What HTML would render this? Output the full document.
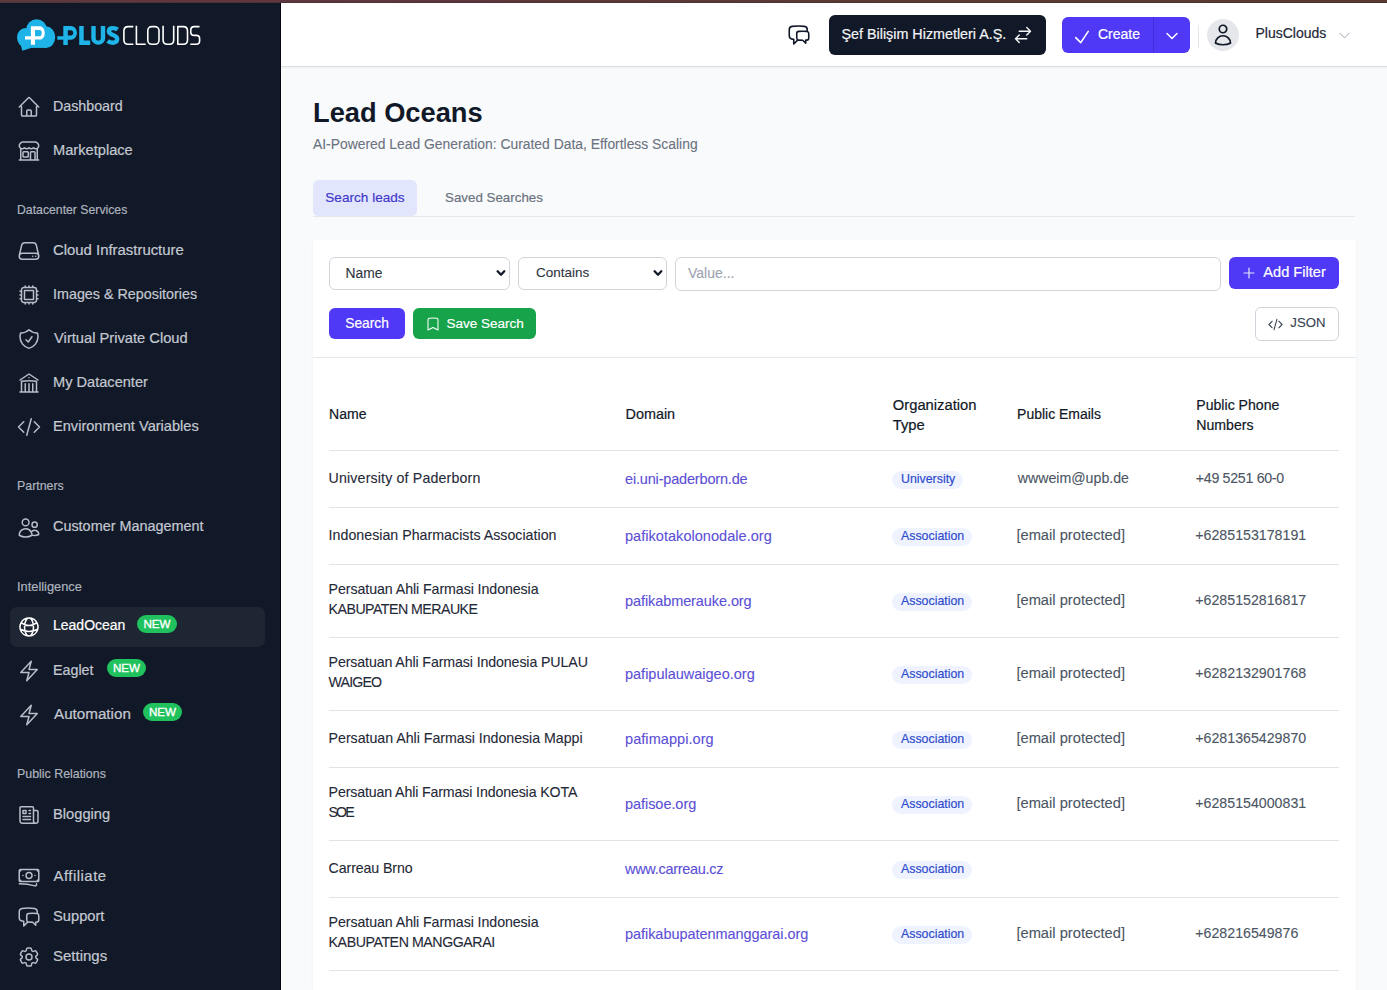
<!DOCTYPE html>
<html><head><meta charset="utf-8"><title>Lead Oceans</title>
<style>
html,body{margin:0;padding:0}
body{width:1387px;height:990px;overflow:hidden;position:relative;background:#f9fafb;font-family:"Liberation Sans",sans-serif}
.t{position:absolute;white-space:nowrap}
.r{position:absolute;box-sizing:content-box}
.i{position:absolute;overflow:visible}
</style></head><body>
<div class="r" style="left:0px;top:0px;width:1387px;height:2px;background:linear-gradient(90deg,#5c3a3c,#603640 20%,#5a3a33 60%,#5b3a30)"></div>
<div class="r" style="left:0px;top:2px;width:1387px;height:1px;background:linear-gradient(90deg,#4e343a,#47312c)"></div>
<div class="r" style="left:0px;top:3px;width:280px;height:987px;background:#111827"></div>
<div class="r" style="left:280px;top:3px;width:1px;height:987px;background:#030712"></div>
<div class="r" style="left:281px;top:3px;width:1106px;height:63px;background:#fff"></div>
<div class="r" style="left:281px;top:66px;width:1106px;height:1px;background:#dcdee2"></div>
<div class="r" style="left:281px;top:67px;width:1106px;height:2px;background:linear-gradient(#eceef1,#f9fafb)"></div>
<svg class="i" style="left:0;top:0" width="210" height="56" viewBox="0 0 210 56">
<g fill="#1eb4e8">
<ellipse cx="25.6" cy="37.6" rx="8.6" ry="9.6"/>
<ellipse cx="46.6" cy="37.2" rx="8.6" ry="10.6"/>
<circle cx="36.6" cy="29.6" r="10.3"/>
<rect x="25" y="30" width="22" height="17.9"/>
<path d="M20 42 L31 47.9 L22.3 50.8 Z"/>
<path d="M57.3 36.2 H66 V39.7 H57.3 Z"/>
<path fill-rule="evenodd" d="M63.3 26 H71 A6 6.85 0 0 1 71 39.7 H67.8 V44.9 H63.3 Z M67.8 30.2 V35.5 H70.8 A2.4 2.65 0 0 0 70.8 30.2 Z"/>
<path d="M79.2 26 H83.7 V40.6 H90.2 V44.9 H79.2 Z"/>
</g>
<g fill="none" stroke="#1eb4e8" stroke-width="4.4">
<path d="M93.5 26 V37.9 A4.75 4.75 0 0 0 103 37.9 V26"/>
<path d="M117.6 29.5 C116.2 28.4 114.6 28.1 112.9 28.1 C110.6 28.1 108.9 29.2 108.9 31.2 C108.9 35.8 117.2 34.2 117.2 39 C117.2 41.4 115.3 42.8 112.6 42.8 C110.8 42.8 109.2 42.3 107.6 41.1"/>
</g>
<path fill="#fff" fill-rule="evenodd" d="M30.9 26.2 H40 A4.8 6.7 0 0 1 40 39.6 H35 V44.8 H30.9 V39.6 H25 V36.2 H30.9 Z M35 30 V36.2 H39.6 A2.1 3.1 0 0 0 39.6 30 Z"/>
<g fill="none" stroke="#fff" stroke-width="1.6" stroke-linejoin="round">
<path d="M133.3 26.6 H128.2 Q123.9 26.6 123.9 31 V40 Q123.9 44.3 128.2 44.3 H133.3"/>
<path d="M136.4 25.8 V44.3 H145.7"/>
<rect x="147.8" y="26.6" width="11.2" height="17.7" rx="4"/>
<path d="M163.1 25.8 V40 Q163.1 44.3 167.4 44.3 H169.4 Q173.7 44.3 173.7 40 V25.8"/>
<path d="M177.8 26.6 H183.3 Q187.5 26.6 187.5 31 V40 Q187.5 44.3 183.3 44.3 H177.8 Z"/>
<path d="M199.5 26.6 H194.2 Q190.8 26.6 190.8 30 V32.2 Q190.8 35.4 194.2 35.4 H196.2 Q199.6 35.4 199.6 38.6 V41 Q199.6 44.3 196.2 44.3 H190.3"/>
</g>
</svg>
<svg class="i" style="left:17px;top:95px;" width="24" height="24" viewBox="0 0 24 24" fill="none" stroke="#b8bec9" stroke-width="1.5" stroke-linecap="round" stroke-linejoin="round"><path d="M2.25 12l8.954-8.955c.44-.439 1.152-.439 1.591 0L21.75 12M4.5 9.75v10.125c0 .621.504 1.125 1.125 1.125H9.75v-4.875c0-.621.504-1.125 1.125-1.125h2.25c.621 0 1.125.504 1.125 1.125V21h4.125c.621 0 1.125-.504 1.125-1.125V9.75M8.25 21h8.25"/></svg>
<div class="t " style="left:53.0px;top:97.56px;font-size:14.25px;line-height:17px;color:#c3c8d1;-webkit-text-stroke:0.20px #c3c8d1;">Dashboard</div>
<svg class="i" style="left:17px;top:139px;" width="24" height="24" viewBox="0 0 24 24" fill="none" stroke="#b8bec9" stroke-width="1.5" stroke-linecap="round" stroke-linejoin="round"><path d="M13.5 21v-7.5a.75.75 0 01.75-.75h3a.75.75 0 01.75.75V21m-4.5 0H2.36m11.14 0H18m0 0h3.64m-1.39 0V9.349m-16.5 11.65V9.35m0 0a3.001 3.001 0 003.75-.615A2.993 2.993 0 009.75 9.75c.896 0 1.7-.393 2.25-1.016a2.993 2.993 0 002.25 1.016c.896 0 1.7-.393 2.25-1.016a3.001 3.001 0 003.75.614m-16.5 0a3.004 3.004 0 01-.621-4.72L4.318 3.44A1.5 1.5 0 015.378 3h13.243a1.5 1.5 0 011.06.44l1.19 1.189a3 3 0 01-.621 4.72m-13.5 8.65h3.75a.75.75 0 00.75-.75V13.5a.75.75 0 00-.75-.75H6.75a.75.75 0 00-.75.75v3.75c0 .415.336.75.75.75z"/></svg>
<div class="t " style="left:53.0px;top:140.92px;font-size:14.65px;line-height:18px;color:#c3c8d1;-webkit-text-stroke:0.21px #c3c8d1;">Marketplace</div>
<div class="t " style="left:17.0px;top:203.45px;font-size:12.26px;line-height:15px;color:#aeb4bf;-webkit-text-stroke:0.18px #aeb4bf;">Datacenter Services</div>
<svg class="i" style="left:17px;top:238.8px;" width="24" height="24" viewBox="0 0 24 24" fill="none" stroke="#b8bec9" stroke-width="1.5" stroke-linecap="round" stroke-linejoin="round"><path d="M21.75 17.25v-.228a4.5 4.5 0 00-.12-1.03l-2.268-9.64a3.375 3.375 0 00-3.285-2.602H7.923a3.375 3.375 0 00-3.285 2.602l-2.268 9.64a4.5 4.5 0 00-.12 1.03v.228m19.5 0a3 3 0 01-3 3H5.25a3 3 0 01-3-3m19.5 0a3 3 0 00-3-3H5.25a3 3 0 00-3 3m16.5 0h.008v.008h-.008v-.008zm-3 0h.008v.008h-.008v-.008z"/></svg>
<div class="t " style="left:53.0px;top:240.63px;font-size:14.9px;line-height:18px;color:#c3c8d1;-webkit-text-stroke:0.21px #c3c8d1;">Cloud Infrastructure</div>
<svg class="i" style="left:17px;top:283px;" width="24" height="24" viewBox="0 0 24 24" fill="none" stroke="#b8bec9" stroke-width="1.5" stroke-linecap="round" stroke-linejoin="round"><path d="M8.25 3v1.5M4.5 8.25H3m18 0h-1.5M4.5 12H3m18 0h-1.5m-15 3.75H3m18 0h-1.5M8.25 19.5V21M12 3v1.5m0 15V21m3.75-18v1.5m0 15V21m-9-1.5h10.5a2.25 2.25 0 002.25-2.25V6.75a2.25 2.25 0 00-2.25-2.25H6.75A2.25 2.25 0 004.5 6.75v10.5a2.25 2.25 0 002.25 2.25zm.75-12h9v9h-9v-9z"/></svg>
<div class="t " style="left:53.0px;top:285.53px;font-size:14.33px;line-height:17px;color:#c3c8d1;-webkit-text-stroke:0.20px #c3c8d1;">Images &amp; Repositories</div>
<svg class="i" style="left:17px;top:326.7px;" width="24" height="24" viewBox="0 0 24 24" fill="none" stroke="#b8bec9" stroke-width="1.5" stroke-linecap="round" stroke-linejoin="round"><path d="M9 12.75L11.25 15 15 9.75m-3-7.036A11.959 11.959 0 013.598 6 11.99 11.99 0 003 9.749c0 5.592 3.824 10.29 9 11.623 5.176-1.332 9-6.03 9-11.622 0-1.31-.21-2.571-.598-3.751h-.152c-3.196 0-6.1-1.248-8.25-3.285z"/></svg>
<div class="t " style="left:54.1px;top:328.60px;font-size:14.7px;line-height:18px;color:#c3c8d1;-webkit-text-stroke:0.21px #c3c8d1;">Virtual Private Cloud</div>
<svg class="i" style="left:17px;top:370.8px;" width="24" height="24" viewBox="0 0 24 24" fill="none" stroke="#b8bec9" stroke-width="1.5" stroke-linecap="round" stroke-linejoin="round"><path d="M12 21v-8.25M15.75 21v-8.25M8.25 21v-8.25M3 9l9-6 9 6m-1.5 12V10.332A48.36 48.36 0 0012 9.75c-2.551 0-5.056.2-7.5.582V21M3 21h18M12 6.75h.008v.008H12V6.75z"/></svg>
<div class="t " style="left:53.0px;top:372.74px;font-size:14.6px;line-height:18px;color:#c3c8d1;-webkit-text-stroke:0.21px #c3c8d1;">My Datacenter</div>
<svg class="i" style="left:17px;top:415px;" width="24" height="24" viewBox="0 0 24 24" fill="none" stroke="#b8bec9" stroke-width="1.5" stroke-linecap="round" stroke-linejoin="round"><path d="M17.25 6.75L22.5 12l-5.25 5.25m-10.5 0L1.5 12l5.25-5.25m7.5-3l-4.5 16.5"/></svg>
<div class="t " style="left:53.0px;top:416.94px;font-size:14.6px;line-height:18px;color:#c3c8d1;-webkit-text-stroke:0.21px #c3c8d1;">Environment Variables</div>
<div class="t " style="left:17.0px;top:479.21px;font-size:12.38px;line-height:15px;color:#aeb4bf;-webkit-text-stroke:0.18px #aeb4bf;">Partners</div>
<svg class="i" style="left:17px;top:515.6px;" width="24" height="24" viewBox="0 0 24 24" fill="none" stroke="#b8bec9" stroke-width="1.5" stroke-linecap="round" stroke-linejoin="round"><path d="M15 19.128a9.38 9.38 0 002.625.372 9.337 9.337 0 004.121-.952 4.125 4.125 0 00-7.533-2.493M15 19.128v-.003c0-1.113-.285-2.16-.786-3.07M15 19.128v.106A12.318 12.318 0 018.624 21c-2.331 0-4.512-.645-6.374-1.766l-.001-.109a6.375 6.375 0 0111.964-3.07M12 6.375a3.375 3.375 0 11-6.75 0 3.375 3.375 0 016.75 0zm8.25 2.25a2.625 2.625 0 11-5.25 0 2.625 2.625 0 015.25 0z"/></svg>
<div class="t " style="left:53.0px;top:518.10px;font-size:14.42px;line-height:17px;color:#c3c8d1;-webkit-text-stroke:0.21px #c3c8d1;">Customer Management</div>
<div class="t " style="left:17.0px;top:579.45px;font-size:12.84px;line-height:15px;color:#aeb4bf;-webkit-text-stroke:0.18px #aeb4bf;">Intelligence</div>
<div class="r" style="left:10px;top:607px;width:255px;height:40px;background:#1f2633;border-radius:7px"></div>
<svg class="i" style="left:17px;top:614.8px;" width="24" height="24" viewBox="0 0 24 24" fill="none" stroke="#ffffff" stroke-width="1.5" stroke-linecap="round" stroke-linejoin="round"><path d="M12 21a9.004 9.004 0 008.716-6.747M12 21a9.004 9.004 0 01-8.716-6.747M12 21c2.485 0 4.5-4.03 4.5-9S14.485 3 12 3m0 18c-2.485 0-4.5-4.03-4.5-9S9.515 3 12 3m0 0a8.997 8.997 0 017.843 4.582M12 3a8.997 8.997 0 00-7.843 4.582m15.686 0A11.953 11.953 0 0112 10.5c-2.998 0-5.74-1.1-7.843-2.918m15.686 0A8.959 8.959 0 0121 12c0 .778-.099 1.533-.284 2.253m0 0A17.919 17.919 0 0112 16.5c-3.162 0-6.133-.815-8.716-2.247m0 0A9.015 9.015 0 013 12c0-1.605.42-3.113 1.157-4.418"/></svg>
<div class="t " style="left:53.0px;top:617.45px;font-size:14.0px;line-height:17px;color:#ffffff;-webkit-text-stroke:0.20px #ffffff;">LeadOcean</div>
<div class="r" style="left:137px;top:615px;width:40px;height:18px;background:#1fc25c;border-radius:9px;color:#fff;font-size:11.6px;-webkit-text-stroke:0.35px #fff;line-height:18px;text-align:center">NEW</div>
<svg class="i" style="left:17px;top:659px;" width="24" height="24" viewBox="0 0 24 24" fill="none" stroke="#b8bec9" stroke-width="1.5" stroke-linecap="round" stroke-linejoin="round"><path d="M3.75 13.5l10.5-11.25L12 10.5h8.25L9.75 21.75 12 13.5H3.75z"/></svg>
<div class="t " style="left:53.0px;top:661.54px;font-size:14.3px;line-height:17px;color:#c3c8d1;-webkit-text-stroke:0.20px #c3c8d1;">Eaglet</div>
<div class="r" style="left:107px;top:659px;width:39px;height:18px;background:#1fc25c;border-radius:9px;color:#fff;font-size:11.6px;-webkit-text-stroke:0.35px #fff;line-height:18px;text-align:center">NEW</div>
<svg class="i" style="left:17px;top:703px;" width="24" height="24" viewBox="0 0 24 24" fill="none" stroke="#b8bec9" stroke-width="1.5" stroke-linecap="round" stroke-linejoin="round"><path d="M3.75 13.5l10.5-11.25L12 10.5h8.25L9.75 21.75 12 13.5H3.75z"/></svg>
<div class="t " style="left:54.0px;top:704.73px;font-size:15.2px;line-height:18px;color:#c3c8d1;-webkit-text-stroke:0.22px #c3c8d1;">Automation</div>
<div class="r" style="left:143px;top:703px;width:39px;height:18px;background:#1fc25c;border-radius:9px;color:#fff;font-size:11.6px;-webkit-text-stroke:0.35px #fff;line-height:18px;text-align:center">NEW</div>
<div class="t " style="left:17.0px;top:767.20px;font-size:12.4px;line-height:15px;color:#aeb4bf;-webkit-text-stroke:0.18px #aeb4bf;">Public Relations</div>
<svg class="i" style="left:17px;top:803.2px;" width="24" height="24" viewBox="0 0 24 24" fill="none" stroke="#b8bec9" stroke-width="1.5" stroke-linecap="round" stroke-linejoin="round"><path d="M12 7.5h1.5m-1.5 3h1.5m-7.5 3h7.5m-7.5 3h7.5m3-9h3.375c.621 0 1.125.504 1.125 1.125V18a2.25 2.25 0 01-2.25 2.25M16.5 7.5V18a2.25 2.25 0 002.25 2.25M16.5 7.5V4.875c0-.621-.504-1.125-1.125-1.125H4.125C3.504 3.75 3 4.254 3 4.875V18a2.25 2.25 0 002.25 2.25h13.5M6 7.5h3v3H6v-3z"/></svg>
<div class="t " style="left:53.0px;top:805.10px;font-size:14.7px;line-height:18px;color:#c3c8d1;-webkit-text-stroke:0.21px #c3c8d1;">Blogging</div>
<svg class="i" style="left:17px;top:865.2px;" width="24" height="24" viewBox="0 0 24 24" fill="none" stroke="#b8bec9" stroke-width="1.5" stroke-linecap="round" stroke-linejoin="round"><path d="M2.25 18.75a60.07 60.07 0 0115.797 2.101c.727.198 1.453-.342 1.453-1.096V18.75M3.75 4.5v.75A.75.75 0 013 6h-.75m0 0v-.375c0-.621.504-1.125 1.125-1.125H20.25M2.25 6v9m18-10.5v.75c0 .414.336.75.75.75h.75m-1.5-1.5h.375c.621 0 1.125.504 1.125 1.125v9.75c0 .621-.504 1.125-1.125 1.125h-.375m1.5-1.5H21a.75.75 0 00-.75.75v.75m0 0H3.75m0 0h-.375a1.125 1.125 0 01-1.125-1.125V15m1.5 1.5v-.75A.75.75 0 003 15h-.75M15 10.5a3 3 0 11-6 0 3 3 0 016 0zm3 0h.008v.008H18V10.5zm-12 0h.008v.008H6V10.5z"/></svg>
<div class="t " style="left:53.5px;top:867.03px;font-size:14.9px;line-height:18px;color:#c3c8d1;-webkit-text-stroke:0.21px #c3c8d1;letter-spacing:0.500px">Affiliate</div>
<svg class="i" style="left:17px;top:905.4px;" width="24" height="24" viewBox="0 0 24 24" fill="none" stroke="#b8bec9" stroke-width="1.5" stroke-linecap="round" stroke-linejoin="round"><path d="M20.25 8.511c.884.284 1.5 1.128 1.5 2.097v4.286c0 1.136-.847 2.1-1.98 2.193-.34.027-.68.052-1.02.072v3.091l-3-3c-1.354 0-2.694-.055-4.02-.163a2.115 2.115 0 01-.825-.242m9.345-8.334a2.126 2.126 0 00-.476-.095 48.64 48.64 0 00-8.048 0c-1.131.094-1.976 1.057-1.976 2.192v4.286c0 .837.46 1.58 1.155 1.951m9.345-8.334V6.637c0-1.621-1.152-3.026-2.76-3.235A48.455 48.455 0 0011.25 3c-2.115 0-4.198.137-6.24.402-1.608.209-2.76 1.614-2.76 3.235v6.226c0 1.621 1.152 3.026 2.76 3.235.577.075 1.157.14 1.74.194V21l4.155-4.155"/></svg>
<div class="t " style="left:53.0px;top:907.30px;font-size:14.7px;line-height:18px;color:#c3c8d1;-webkit-text-stroke:0.21px #c3c8d1;">Support</div>
<svg class="i" style="left:17px;top:945.4px;" width="24" height="24" viewBox="0 0 24 24" fill="none" stroke="#b8bec9" stroke-width="1.5" stroke-linecap="round" stroke-linejoin="round"><path d="M9.594 3.94c.09-.542.56-.94 1.11-.94h2.593c.55 0 1.02.398 1.11.94l.213 1.281c.063.374.313.686.645.87.074.04.147.083.22.127.324.196.72.257 1.075.124l1.217-.456a1.125 1.125 0 011.37.49l1.296 2.247a1.125 1.125 0 01-.26 1.431l-1.003.827c-.293.24-.438.613-.431.992a6.759 6.759 0 010 .255c-.007.378.138.75.43.99l1.005.828c.424.35.534.954.26 1.43l-1.298 2.247a1.125 1.125 0 01-1.369.491l-1.217-.456c-.355-.133-.75-.072-1.076.124a6.57 6.57 0 01-.22.128c-.331.183-.581.495-.644.869l-.213 1.28c-.09.543-.56.941-1.11.941h-2.594c-.55 0-1.02-.398-1.11-.94l-.213-1.281c-.062-.374-.312-.686-.644-.87a6.52 6.52 0 01-.22-.127c-.325-.196-.72-.257-1.076-.124l-1.217.456a1.125 1.125 0 01-1.369-.49l-1.297-2.247a1.125 1.125 0 01.26-1.431l1.004-.827c.292-.24.437-.613.43-.992a6.932 6.932 0 010-.255c.007-.378-.138-.75-.43-.99l-1.004-.828a1.125 1.125 0 01-.26-1.43l1.297-2.247a1.125 1.125 0 011.37-.491l1.216.456c.356.133.751.072 1.076-.124.072-.044.146-.087.22-.128.332-.183.582-.495.644-.869l.214-1.281zM15 12a3 3 0 11-6 0 3 3 0 016 0z"/></svg>
<div class="t " style="left:53.0px;top:947.20px;font-size:15px;line-height:18px;color:#c3c8d1;-webkit-text-stroke:0.21px #c3c8d1;">Settings</div>
<svg class="i" style="left:787px;top:23px;" width="24" height="24" viewBox="0 0 24 24" fill="none" stroke="#111827" stroke-width="1.6" stroke-linecap="round" stroke-linejoin="round"><path d="M20.25 8.511c.884.284 1.5 1.128 1.5 2.097v4.286c0 1.136-.847 2.1-1.98 2.193-.34.027-.68.052-1.02.072v3.091l-3-3c-1.354 0-2.694-.055-4.02-.163a2.115 2.115 0 01-.825-.242m9.345-8.334a2.126 2.126 0 00-.476-.095 48.64 48.64 0 00-8.048 0c-1.131.094-1.976 1.057-1.976 2.192v4.286c0 .837.46 1.58 1.155 1.951m9.345-8.334V6.637c0-1.621-1.152-3.026-2.76-3.235A48.455 48.455 0 0011.25 3c-2.115 0-4.198.137-6.24.402-1.608.209-2.76 1.614-2.76 3.235v6.226c0 1.621 1.152 3.026 2.76 3.235.577.075 1.157.14 1.74.194V21l4.155-4.155"/></svg>
<div class="r" style="left:829px;top:15px;width:217px;height:40px;background:#111827;border-radius:6px"></div>
<div class="t " style="left:841.5px;top:25.83px;font-size:14.33px;line-height:17px;color:#f3f4f6;-webkit-text-stroke:0.20px #f3f4f6;">Şef Bilişim Hizmetleri A.Ş.</div>
<svg class="i" style="left:1013px;top:25px;" width="20" height="20" viewBox="0 0 24 24" fill="none" stroke="#f3f4f6" stroke-width="1.7" stroke-linecap="round" stroke-linejoin="round"><path d="M7.5 21L3 16.5m0 0L7.5 12M3 16.5h13.5m0-13.5L21 7.5m0 0L16.5 12M21 7.5H7.5"/></svg>
<div class="r" style="left:1062px;top:17px;width:128px;height:36px;background:#4f39f6;border-radius:6px"></div>
<div class="r" style="left:1153px;top:17px;width:1px;height:36px;background:#4230d6"></div>
<svg class="i" style="left:1071.5px;top:26.5px;" width="20" height="20" viewBox="0 0 24 24" fill="none" stroke="#fff" stroke-width="1.9" stroke-linecap="round" stroke-linejoin="round"><path d="M4.5 12.75l6 6 9-13.5"/></svg>
<div class="t " style="left:1097.9px;top:25.83px;font-size:14.05px;line-height:17px;color:#fff;-webkit-text-stroke:0.20px #fff;">Create</div>
<svg class="i" style="left:1163.5px;top:27.5px;" width="16" height="16" viewBox="0 0 24 24" fill="none" stroke="#fff" stroke-width="2.2" stroke-linecap="round" stroke-linejoin="round"><path d="M19.5 8.25l-7.5 7.5-7.5-7.5"/></svg>
<div class="r" style="left:1198px;top:25px;width:1px;height:23px;background:#e5e7eb"></div>
<div class="r" style="left:1207px;top:19px;width:32px;height:32px;border-radius:16px;background:#e5e7eb"></div>
<svg class="i" style="left:1211px;top:23.3px;" width="24" height="24" viewBox="0 0 24 24" fill="none" stroke="#111827" stroke-width="1.7" stroke-linecap="round" stroke-linejoin="round"><path d="M15.75 6a3.75 3.75 0 11-7.5 0 3.75 3.75 0 017.5 0zM4.501 20.118a7.5 7.5 0 0114.998 0A17.933 17.933 0 0112 21.75c-2.676 0-5.216-.584-7.499-1.632z"/></svg>
<div class="t " style="left:1255.5px;top:25.35px;font-size:14.0px;line-height:17px;color:#1f2937;-webkit-text-stroke:0.20px #1f2937;">PlusClouds</div>
<svg class="i" style="left:1337px;top:28px;" width="15" height="15" viewBox="0 0 24 24" fill="none" stroke="#9ca3af" stroke-width="1.6" stroke-linecap="round" stroke-linejoin="round"><path d="M19.5 8.25l-7.5 7.5-7.5-7.5"/></svg>
<div class="t " style="left:313.0px;top:96.45px;font-size:27.25px;line-height:33px;color:#111827;font-weight:700;">Lead Oceans</div>
<div class="t " style="left:313.0px;top:135.99px;font-size:13.88px;line-height:17px;color:#6b7280;-webkit-text-stroke:0.1px #6b7280;">AI-Powered Lead Generation: Curated Data, Effortless Scaling</div>
<div class="r" style="left:313px;top:180px;width:104px;height:36px;background:#e1e6fd;border-radius:6px 6px 5px 5px"></div>
<div class="t " style="left:325.3px;top:189.68px;font-size:13.6px;line-height:16px;color:#4338ca;-webkit-text-stroke:0.19px #4338ca;">Search leads</div>
<div class="t " style="left:445.0px;top:189.77px;font-size:13.35px;line-height:16px;color:#6b7280;-webkit-text-stroke:0.19px #6b7280;">Saved Searches</div>
<div class="r" style="left:313px;top:216px;width:1042px;height:1px;background:#e5e7eb"></div>
<div class="r" style="left:313px;top:240px;width:1043px;height:750px;background:#fff;box-shadow:0 1px 3px rgba(0,0,0,0.05)"></div>
<div class="r" style="left:329px;top:257px;width:179px;height:31px;border:1px solid #d1d5db;border-radius:6px;background:#fff;"></div>
<div class="t " style="left:345.6px;top:264.72px;font-size:13.8px;line-height:17px;color:#2d3441;-webkit-text-stroke:0.1px #2d3441;">Name</div>
<svg class="i" style="left:494px;top:268px" width="14" height="10" viewBox="0 0 14 10" fill="none" stroke="#111827" stroke-width="2.3" stroke-linecap="round" stroke-linejoin="round"><path d="M3.6 3.3 L7 6.8 L10.3 3.3"/></svg>
<div class="r" style="left:518px;top:257px;width:147px;height:31px;border:1px solid #d1d5db;border-radius:6px;background:#fff;"></div>
<div class="t " style="left:536.0px;top:265.33px;font-size:13.47px;line-height:16px;color:#2d3441;-webkit-text-stroke:0.1px #2d3441;">Contains</div>
<svg class="i" style="left:650.5px;top:268px" width="14" height="10" viewBox="0 0 14 10" fill="none" stroke="#111827" stroke-width="2.3" stroke-linecap="round" stroke-linejoin="round"><path d="M3.6 3.3 L7 6.8 L10.3 3.3"/></svg>
<div class="r" style="left:675px;top:257px;width:544px;height:32px;border:1px solid #d1d5db;border-radius:6px;background:#fff;"></div>
<div class="t " style="left:688.0px;top:265.15px;font-size:14px;line-height:17px;color:#9ca3af;-webkit-text-stroke:0.1px #9ca3af;">Value...</div>
<div class="r" style="left:1229px;top:257px;width:110px;height:32px;background:#4f39f6;border-radius:6px"></div>
<svg class="i" style="left:1241px;top:265px;" width="16" height="16" viewBox="0 0 24 24" fill="none" stroke="#e0e7ff" stroke-width="1.8" stroke-linecap="round" stroke-linejoin="round"><path d="M12 4.5v15m7.5-7.5h-15"/></svg>
<div class="t " style="left:1263.3px;top:263.14px;font-size:14.6px;line-height:18px;color:#fff;-webkit-text-stroke:0.21px #fff;">Add Filter</div>
<div class="r" style="left:329px;top:308px;width:76px;height:31px;background:#4f39f6;border-radius:6px"></div>
<div class="t " style="left:345.3px;top:315.63px;font-size:13.75px;line-height:16px;color:#fff;-webkit-text-stroke:0.20px #fff;">Search</div>
<div class="r" style="left:413px;top:308px;width:123px;height:31px;background:#16a34a;border-radius:6px"></div>
<svg class="i" style="left:424.5px;top:316px;" width="16" height="16" viewBox="0 0 24 24" fill="none" stroke="#fff" stroke-width="1.6" stroke-linecap="round" stroke-linejoin="round"><path d="M17.593 3.322c1.1.128 1.907 1.077 1.907 2.185V21L12 17.25 4.5 21V5.507c0-1.108.806-2.057 1.907-2.185a48.507 48.507 0 0111.186 0z"/></svg>
<div class="t " style="left:446.5px;top:315.71px;font-size:13.52px;line-height:16px;color:#fff;-webkit-text-stroke:0.19px #fff;">Save Search</div>
<div class="r" style="left:1255px;top:307px;width:82px;height:32px;border:1px solid #d1d5db;border-radius:6px;background:#fff;"></div>
<svg class="i" style="left:1267.5px;top:316.5px;" width="15" height="15" viewBox="0 0 24 24" fill="none" stroke="#374151" stroke-width="1.7" stroke-linecap="round" stroke-linejoin="round"><path d="M17.25 6.75L22.5 12l-5.25 5.25m-10.5 0L1.5 12l5.25-5.25m7.5-3l-4.5 16.5"/></svg>
<div class="t " style="left:1290.3px;top:315.43px;font-size:13.18px;line-height:16px;color:#374151;-webkit-text-stroke:0.1px #374151;">JSON</div>
<div class="r" style="left:313px;top:357px;width:1043px;height:1px;background:#e5e7eb"></div>
<div class="t " style="left:329.1px;top:406.43px;font-size:14.06px;line-height:17px;color:#111827;-webkit-text-stroke:0.20px #111827;">Name</div>
<div class="t " style="left:625.5px;top:406.31px;font-size:14.4px;line-height:17px;color:#111827;-webkit-text-stroke:0.21px #111827;">Domain</div>
<div class="t " style="left:892.8px;top:395.88px;font-size:14.76px;line-height:18px;color:#111827;-webkit-text-stroke:0.21px #111827;">Organization</div>
<div class="t " style="left:892.8px;top:415.88px;font-size:14.76px;line-height:18px;color:#111827;-webkit-text-stroke:0.21px #111827;">Type</div>
<div class="t " style="left:1017.1px;top:406.36px;font-size:13.97px;line-height:17px;color:#111827;-webkit-text-stroke:0.20px #111827;">Public Emails</div>
<div class="t " style="left:1196.3px;top:396.61px;font-size:14.1px;line-height:17px;color:#111827;-webkit-text-stroke:0.20px #111827;">Public Phone</div>
<div class="t " style="left:1196.3px;top:416.61px;font-size:14.1px;line-height:17px;color:#111827;-webkit-text-stroke:0.20px #111827;">Numbers</div>
<div class="r" style="left:329px;top:450px;width:1010px;height:1px;background:#e1e3e7"></div>
<div class="r" style="left:329px;top:507px;width:1010px;height:1px;background:#e1e3e7"></div>
<div class="r" style="left:329px;top:564px;width:1010px;height:1px;background:#e1e3e7"></div>
<div class="r" style="left:329px;top:637px;width:1010px;height:1px;background:#e1e3e7"></div>
<div class="r" style="left:329px;top:710px;width:1010px;height:1px;background:#e1e3e7"></div>
<div class="r" style="left:329px;top:767px;width:1010px;height:1px;background:#e1e3e7"></div>
<div class="r" style="left:329px;top:840px;width:1010px;height:1px;background:#e1e3e7"></div>
<div class="r" style="left:329px;top:897px;width:1010px;height:1px;background:#e1e3e7"></div>
<div class="r" style="left:329px;top:970px;width:1010px;height:1px;background:#e1e3e7"></div>
<div class="t " style="left:328.6px;top:469.68px;font-size:14.2px;line-height:17px;color:#1f2937;-webkit-text-stroke:0.1px #1f2937;letter-spacing:0.159px">University of Paderborn</div>
<div class="t " style="left:625.0px;top:470.87px;font-size:14.5px;line-height:17px;color:#5b4fd6;-webkit-text-stroke:0.1px #5b4fd6;letter-spacing:-0.171px">ei.uni-paderborn.de</div>
<div class="r" style="left:892px;top:470.7px;width:71px;height:18px;border-radius:9px;background:#eef3ff"></div>
<div class="t " style="left:901.0px;top:472.21px;font-size:12.36px;line-height:15px;color:#2f4bcc;-webkit-text-stroke:0.18px #2f4bcc;">University</div>
<div class="t " style="left:1017.7px;top:469.58px;font-size:14.18px;line-height:17px;color:#4b5563;-webkit-text-stroke:0.1px #4b5563;">wwweim@upb.de</div>
<div class="t " style="left:1195.8px;top:469.58px;font-size:14.2px;line-height:17px;color:#4b5563;-webkit-text-stroke:0.1px #4b5563;letter-spacing:-0.295px">+49 5251 60-0</div>
<div class="t " style="left:328.6px;top:526.68px;font-size:14.2px;line-height:17px;color:#1f2937;-webkit-text-stroke:0.1px #1f2937;letter-spacing:0.023px">Indonesian Pharmacists Association</div>
<div class="t " style="left:625.0px;top:527.87px;font-size:14.5px;line-height:17px;color:#5b4fd6;-webkit-text-stroke:0.1px #5b4fd6;letter-spacing:0.039px">pafikotakolonodale.org</div>
<div class="r" style="left:892px;top:527.7px;width:80px;height:18px;border-radius:9px;background:#eef3ff"></div>
<div class="t " style="left:901.0px;top:529.21px;font-size:12.36px;line-height:15px;color:#2f4bcc;-webkit-text-stroke:0.18px #2f4bcc;">Association</div>
<div class="t " style="left:1016.4px;top:525.90px;font-size:14.7px;line-height:18px;color:#4b5563;-webkit-text-stroke:0.1px #4b5563;">[email&#160;protected]</div>
<div class="t " style="left:1195.3px;top:526.58px;font-size:14.2px;line-height:17px;color:#4b5563;-webkit-text-stroke:0.1px #4b5563;">+6285153178191</div>
<div class="t " style="left:328.6px;top:581.38px;font-size:14.2px;line-height:17px;color:#1f2937;-webkit-text-stroke:0.1px #1f2937;letter-spacing:-0.069px">Persatuan Ahli Farmasi Indonesia</div>
<div class="t " style="left:328.6px;top:601.48px;font-size:14.2px;line-height:17px;color:#1f2937;-webkit-text-stroke:0.1px #1f2937;letter-spacing:-0.534px">KABUPATEN MERAUKE</div>
<div class="t " style="left:625.0px;top:592.87px;font-size:14.5px;line-height:17px;color:#5b4fd6;-webkit-text-stroke:0.1px #5b4fd6;letter-spacing:-0.088px">pafikabmerauke.org</div>
<div class="r" style="left:892px;top:592.7px;width:80px;height:18px;border-radius:9px;background:#eef3ff"></div>
<div class="t " style="left:901.0px;top:594.21px;font-size:12.36px;line-height:15px;color:#2f4bcc;-webkit-text-stroke:0.18px #2f4bcc;">Association</div>
<div class="t " style="left:1016.4px;top:590.90px;font-size:14.7px;line-height:18px;color:#4b5563;-webkit-text-stroke:0.1px #4b5563;">[email&#160;protected]</div>
<div class="t " style="left:1195.3px;top:591.58px;font-size:14.2px;line-height:17px;color:#4b5563;-webkit-text-stroke:0.1px #4b5563;">+6285152816817</div>
<div class="t " style="left:328.6px;top:654.38px;font-size:14.2px;line-height:17px;color:#1f2937;-webkit-text-stroke:0.1px #1f2937;letter-spacing:-0.111px">Persatuan Ahli Farmasi Indonesia PULAU</div>
<div class="t " style="left:328.6px;top:674.48px;font-size:14.2px;line-height:17px;color:#1f2937;-webkit-text-stroke:0.1px #1f2937;letter-spacing:-0.857px">WAIGEO</div>
<div class="t " style="left:625.0px;top:665.87px;font-size:14.5px;line-height:17px;color:#5b4fd6;-webkit-text-stroke:0.1px #5b4fd6;letter-spacing:-0.005px">pafipulauwaigeo.org</div>
<div class="r" style="left:892px;top:665.7px;width:80px;height:18px;border-radius:9px;background:#eef3ff"></div>
<div class="t " style="left:901.0px;top:667.21px;font-size:12.36px;line-height:15px;color:#2f4bcc;-webkit-text-stroke:0.18px #2f4bcc;">Association</div>
<div class="t " style="left:1016.4px;top:663.90px;font-size:14.7px;line-height:18px;color:#4b5563;-webkit-text-stroke:0.1px #4b5563;">[email&#160;protected]</div>
<div class="t " style="left:1195.3px;top:664.58px;font-size:14.2px;line-height:17px;color:#4b5563;-webkit-text-stroke:0.1px #4b5563;">+6282132901768</div>
<div class="t " style="left:328.6px;top:729.68px;font-size:14.2px;line-height:17px;color:#1f2937;-webkit-text-stroke:0.1px #1f2937;letter-spacing:-0.019px">Persatuan Ahli Farmasi Indonesia Mappi</div>
<div class="t " style="left:625.0px;top:730.87px;font-size:14.5px;line-height:17px;color:#5b4fd6;-webkit-text-stroke:0.1px #5b4fd6;letter-spacing:0.068px">pafimappi.org</div>
<div class="r" style="left:892px;top:730.7px;width:80px;height:18px;border-radius:9px;background:#eef3ff"></div>
<div class="t " style="left:901.0px;top:732.21px;font-size:12.36px;line-height:15px;color:#2f4bcc;-webkit-text-stroke:0.18px #2f4bcc;">Association</div>
<div class="t " style="left:1016.4px;top:728.90px;font-size:14.7px;line-height:18px;color:#4b5563;-webkit-text-stroke:0.1px #4b5563;">[email&#160;protected]</div>
<div class="t " style="left:1195.3px;top:729.58px;font-size:14.2px;line-height:17px;color:#4b5563;-webkit-text-stroke:0.1px #4b5563;">+6281365429870</div>
<div class="t " style="left:328.6px;top:784.38px;font-size:14.2px;line-height:17px;color:#1f2937;-webkit-text-stroke:0.1px #1f2937;letter-spacing:-0.136px">Persatuan Ahli Farmasi Indonesia KOTA</div>
<div class="t " style="left:328.6px;top:804.48px;font-size:14.2px;line-height:17px;color:#1f2937;-webkit-text-stroke:0.1px #1f2937;letter-spacing:-1.977px">SOE</div>
<div class="t " style="left:625.0px;top:795.87px;font-size:14.5px;line-height:17px;color:#5b4fd6;-webkit-text-stroke:0.1px #5b4fd6;letter-spacing:-0.052px">pafisoe.org</div>
<div class="r" style="left:892px;top:795.7px;width:80px;height:18px;border-radius:9px;background:#eef3ff"></div>
<div class="t " style="left:901.0px;top:797.21px;font-size:12.36px;line-height:15px;color:#2f4bcc;-webkit-text-stroke:0.18px #2f4bcc;">Association</div>
<div class="t " style="left:1016.4px;top:793.90px;font-size:14.7px;line-height:18px;color:#4b5563;-webkit-text-stroke:0.1px #4b5563;">[email&#160;protected]</div>
<div class="t " style="left:1195.3px;top:794.58px;font-size:14.2px;line-height:17px;color:#4b5563;-webkit-text-stroke:0.1px #4b5563;">+6285154000831</div>
<div class="t " style="left:328.6px;top:859.68px;font-size:14.2px;line-height:17px;color:#1f2937;-webkit-text-stroke:0.1px #1f2937;letter-spacing:-0.102px">Carreau Brno</div>
<div class="t " style="left:625.0px;top:860.87px;font-size:14.5px;line-height:17px;color:#5b4fd6;-webkit-text-stroke:0.1px #5b4fd6;letter-spacing:-0.296px">www.carreau.cz</div>
<div class="r" style="left:892px;top:860.7px;width:80px;height:18px;border-radius:9px;background:#eef3ff"></div>
<div class="t " style="left:901.0px;top:862.21px;font-size:12.36px;line-height:15px;color:#2f4bcc;-webkit-text-stroke:0.18px #2f4bcc;">Association</div>
<div class="t " style="left:328.6px;top:914.38px;font-size:14.2px;line-height:17px;color:#1f2937;-webkit-text-stroke:0.1px #1f2937;letter-spacing:-0.069px">Persatuan Ahli Farmasi Indonesia</div>
<div class="t " style="left:328.6px;top:934.48px;font-size:14.2px;line-height:17px;color:#1f2937;-webkit-text-stroke:0.1px #1f2937;letter-spacing:-0.443px">KABUPATEN MANGGARAI</div>
<div class="t " style="left:625.0px;top:925.87px;font-size:14.5px;line-height:17px;color:#5b4fd6;-webkit-text-stroke:0.1px #5b4fd6;letter-spacing:-0.052px">pafikabupatenmanggarai.org</div>
<div class="r" style="left:892px;top:925.7px;width:80px;height:18px;border-radius:9px;background:#eef3ff"></div>
<div class="t " style="left:901.0px;top:927.21px;font-size:12.36px;line-height:15px;color:#2f4bcc;-webkit-text-stroke:0.18px #2f4bcc;">Association</div>
<div class="t " style="left:1016.4px;top:923.90px;font-size:14.7px;line-height:18px;color:#4b5563;-webkit-text-stroke:0.1px #4b5563;">[email&#160;protected]</div>
<div class="t " style="left:1195.3px;top:924.58px;font-size:14.2px;line-height:17px;color:#4b5563;-webkit-text-stroke:0.1px #4b5563;">+628216549876</div>
</body></html>
